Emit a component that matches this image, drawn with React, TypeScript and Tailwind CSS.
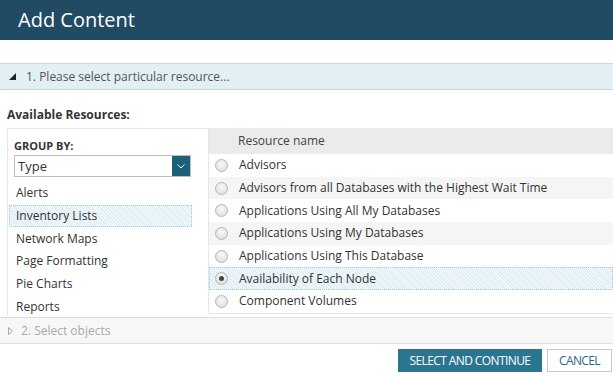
import React from 'react';

const groups = ['Alerts', 'Inventory Lists', 'Network Maps', 'Page Formatting', 'Pie Charts', 'Reports'];

const resources = [
    'Advisors',
    'Advisors from all Databases with the Highest Wait Time',
    'Applications Using All My Databases',
    'Applications Using My Databases',
    'Applications Using This Database',
    'Availability of Each Node',
    'Component Volumes',
];

// selected row: fine light-blue hatch with dotted edge
const hatch =
    'bg-[repeating-linear-gradient(45deg,#dcedf3_0px,#dcedf3_1px,#f0f7fa_1px,#f0f7fa_2.5px)] outline outline-1 outline-dotted outline-[#9ccbdc] -outline-offset-1';

const Radio: React.FC<{ checked?: boolean }> = ({ checked }) => (
    <span className="w-[13px] h-[13px] rounded-full border border-[#b5b5b5] bg-[radial-gradient(circle_at_50%_35%,#fafafa,#d8d8d8)] flex items-center justify-center shrink-0">
        {checked && <span className="w-[5px] h-[5px] rounded-full bg-[#444]" />}
    </span>
);

export default function App() {
    return (
        <div className="w-[613px] h-[376px] bg-white overflow-hidden font-['Open_Sans',sans-serif] text-[#333]">
            {/* Title bar */}
            <div className="h-[40px] bg-[#214a63] flex items-center px-[18px]">
                <h1 className="text-white text-[20px] leading-none">Add Content</h1>
            </div>

            <div className="h-[23px]" />

            {/* Step 1 */}
            <div className="h-[27px] bg-[#e2eff4] border-y border-[#cdd6da] flex items-center pl-[9px] gap-[10px]">
                <svg width="7" height="7" viewBox="0 0 7 7">
                    <path d="M7 0 L7 7 L0 7 Z" fill="#222" />
                </svg>
                <span className="text-[12px] text-[#555]">1. Please select particular resource...</span>
            </div>

            <div className="pl-[7px] pt-[17px] pb-[5px] text-[12px] font-bold text-[#333] leading-[16px]">Available Resources:</div>

            {/* Panels */}
            <div className="flex pl-[7px] h-[188px]">
                <div className="w-[201px] border-t border-l border-[#e6e6e6] pt-[10px] pl-[1px]">
                    <div className="pl-[5px] text-[11px] font-bold text-[#333] leading-[14px]">GROUP BY:</div>
                    <div className="ml-[5px] mt-[2px] w-[177px] h-[22px] border border-[#bdbdbd] flex">
                        <span className="flex-1 pl-[3px] text-[13px] leading-[20px] text-[#333]">Type</span>
                        <span className="w-[18px] bg-[#1d6079] flex items-center justify-center">
                            <svg width="8" height="5" viewBox="0 0 8 5">
                                <path d="M0.5 0.5 L4 4 L7.5 0.5" fill="none" stroke="#fff" strokeWidth="1" />
                            </svg>
                        </span>
                    </div>
                    <ul className="mt-[5px] w-[183px]">
                        {groups.map((g, i) => (
                            <li
                                key={g}
                                className={`h-[22.7px] flex items-center pl-[7px] text-[12px] ${i === 1 ? hatch : ''}`}
                            >
                                {g}
                            </li>
                        ))}
                    </ul>
                </div>

                <div className="flex-1 border-l border-b border-[#e6e6e6] self-start">
                    <div className="h-[26px] bg-[#ebebeb] flex items-center pl-[29px] text-[12px] text-[#444]">
                        Resource name
                    </div>
                    {resources.map((r, i) => (
                        <div
                            key={r}
                            className={`h-[22.7px] flex items-center pl-[6px] gap-[11px] text-[12px] ${
                                i === 5 ? hatch : i % 2 === 1 ? 'bg-[#f5f5f5]' : 'bg-white'
                            }`}
                        >
                            <Radio checked={i === 5} />
                            <span>{r}</span>
                        </div>
                    ))}
                </div>
            </div>

            {/* Step 2 */}
            <div className="mt-[1px] h-[27px] bg-[#f7f7f7] border-y border-[#dedede] flex items-center pl-[8px] gap-[8px]">
                <svg width="5" height="8" viewBox="0 0 5 8">
                    <path d="M0.5 0.5 L4.5 4 L0.5 7.5 Z" fill="none" stroke="#aaa" strokeWidth="1" />
                </svg>
                <span className="text-[12px] text-[#aaa]">2. Select objects</span>
            </div>

            {/* Actions */}
            <div className="flex justify-end gap-[5px] pr-[1px] pt-[5px]">
                <button className="h-[23px] w-[144px] bg-[#2a7590] text-white text-[12px] tracking-[-0.6px]">
                    SELECT AND CONTINUE
                </button>
                <button className="h-[23px] w-[65px] bg-white border border-[#c8c8c8] text-[#2a6a84] text-[12px] tracking-[-0.6px]">
                    CANCEL
                </button>
            </div>
        </div>
    );
}
